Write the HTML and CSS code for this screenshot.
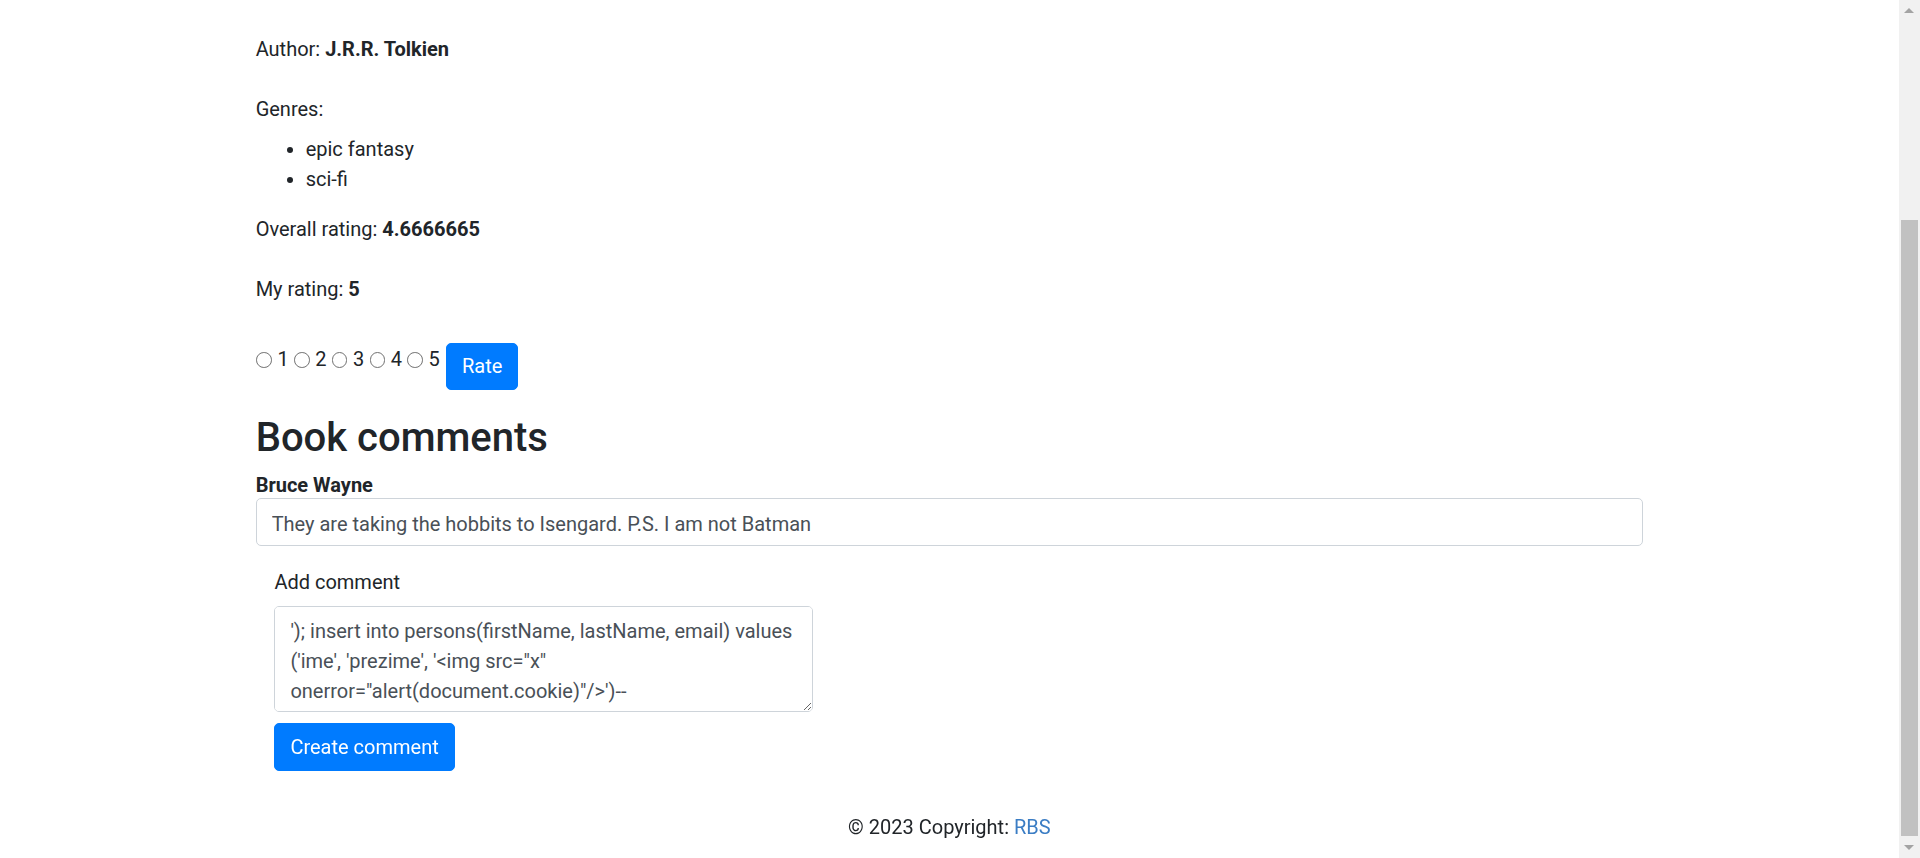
FILE: index.html
```html
<!DOCTYPE html>
<html lang="en">
<head>
<meta charset="utf-8">
<title>Book details</title>
<link rel="stylesheet" href="styles.css">
</head>
<body>
<div class="page">
  <main class="container">
    <div class="field"><label>Author: <b>J.R.R. Tolkien</b></label></div>
    <div class="genres">
      <label>Genres:</label>
      <ul>
        <li>epic fantasy</li>
        <li>sci-fi</li>
      </ul>
    </div>
    <div class="field"><label>Overall rating: <b>4.6666665</b></label></div>
    <div class="field field-last"><label>My rating: <b>5</b></label></div>
    <form class="rate-row">
      <label class="opt"><input type="radio" name="rating" value="1"><span>1</span></label>
      <label class="opt"><input type="radio" name="rating" value="2"><span>2</span></label>
      <label class="opt"><input type="radio" name="rating" value="3"><span>3</span></label>
      <label class="opt"><input type="radio" name="rating" value="4"><span>4</span></label>
      <label class="opt opt-last"><input type="radio" name="rating" value="5"><span>5</span></label>
      <button type="button" class="btn">Rate</button>
    </form>
    <h2>Book comments</h2>
    <div class="comment">
      <div class="comment-author">Bruce Wayne</div>
      <input class="form-control" type="text" value="They are taking the hobbits to Isengard. P.S. I am not Batman" readonly>
    </div>
    <form class="comment-form">
      <label for="newComment">Add comment</label>
      <textarea id="newComment" class="form-control comment-text" rows="3">'); insert into persons(firstName, lastName, email) values ('ime', 'prezime', '&lt;img src="x" onerror="alert(document.cookie)"/&gt;')--</textarea>
      <button type="button" class="btn">Create comment</button>
    </form>
  </main>
  <footer class="footer">© 2023 Copyright: <a href="#">RBS</a></footer>
</div>
<div class="scrollbar">
  <span class="sb-btn"><span class="arrow-up"></span></span>
  <span class="thumb"></span>
  <span class="sb-btn"><span class="arrow-down"></span></span>
</div>
</body>
</html>
```

FILE: styles.css
```css
html {
  zoom: 1.25;
}

* {
  box-sizing: border-box;
}

body {
  margin: 0;
  display: flex;
  height: 686.4px;
  overflow: hidden;
  font-family: "Segoe UI", Roboto, "Helvetica Neue", Arial, sans-serif;
  font-size: 16px;
  line-height: 1.5;
  color: #212529;
  background: #fff;
}

.page {
  flex: 1;
  min-width: 0;
  display: flex;
  flex-direction: column;
}

.container {
  width: 1110px;
  margin: 0 auto;
  padding-top: 26px;
}

label {
  display: inline-block;
}

.field {
  margin-bottom: 22.5px;
}

.field label {
  padding-top: 1.5px;
}

.field-last {
  margin-bottom: 30.5px;
}

.genres label {
  padding-top: 1.5px;
  margin-bottom: 6.5px;
}

ul {
  margin: 0 0 14.5px;
  padding: 1.5px 0 0 40px;
}

.rate-row {
  display: flex;
  align-items: flex-start;
  margin: 0 0 16px;
}

.opt {
  display: flex;
  align-items: flex-start;
  margin-right: 3.7px;
}

.opt-last {
  margin-right: 5px;
}

.opt span {
  padding-top: 1px;
}

.opt input {
  -webkit-appearance: none;
  appearance: none;
  flex: none;
  width: 12.5px;
  height: 12.5px;
  margin: 7.5px 4.5px 0 0.5px;
  border: 1px solid #707070;
  border-radius: 50%;
  background: #fff;
}

.btn {
  font: inherit;
  display: inline-block;
  height: 38px;
  padding: 6px 12px;
  line-height: 24px;
  color: #fff;
  background: #007bff;
  border: 1px solid #007bff;
  border-radius: 4px;
  cursor: pointer;
}

h2 {
  font-size: 32px;
  font-weight: 500;
  line-height: 1.2;
  padding-top: 3px;
  margin: 0 0 5px;
}

.comment {
  margin-bottom: 16px;
}

.comment-author {
  font-weight: 700;
  padding-top: 1.5px;
  margin-bottom: -1.5px;
}

.form-control {
  display: block;
  width: 100%;
  padding: 7.5px 12px 4.5px;
  font: inherit;
  color: #495057;
  background: #fff;
  border: 1px solid #ced4da;
  border-radius: 4px;
}

input.form-control {
  height: 38px;
}

.comment-form {
  display: flex;
  flex-direction: column;
  align-items: flex-start;
  padding: 0 15px;
  margin-bottom: 15px;
}

.comment-form label {
  padding-top: 1.5px;
  margin-bottom: 6.5px;
}

.comment-text {
  width: 431px;
  height: 85px;
}

.comment-form .btn {
  margin-top: 9px;
}

.footer {
  text-align: center;
  padding: 18px 16px 14px;
}

.footer a {
  color: #3b7dc4;
  text-decoration: none;
}

.scrollbar {
  flex: none;
  width: 17px;
  display: flex;
  flex-direction: column;
  align-items: center;
  background: #f1f1f1;
}

.sb-btn {
  flex: none;
  width: 17px;
  height: 17px;
  display: flex;
  align-items: center;
  justify-content: center;
}

.thumb {
  flex: none;
  width: 13px;
  margin-top: 159px;
  height: 493px;
  background: #c1c1c1;
}

.scrollbar .sb-btn:last-child {
  margin-top: auto;
}

.arrow-up {
  width: 0;
  height: 0;
  border-left: 4px solid transparent;
  border-right: 4px solid transparent;
  border-bottom: 4px solid #a3a3a3;
}

.arrow-down {
  width: 0;
  height: 0;
  border-left: 4px solid transparent;
  border-right: 4px solid transparent;
  border-top: 4px solid #a3a3a3;
}
```
